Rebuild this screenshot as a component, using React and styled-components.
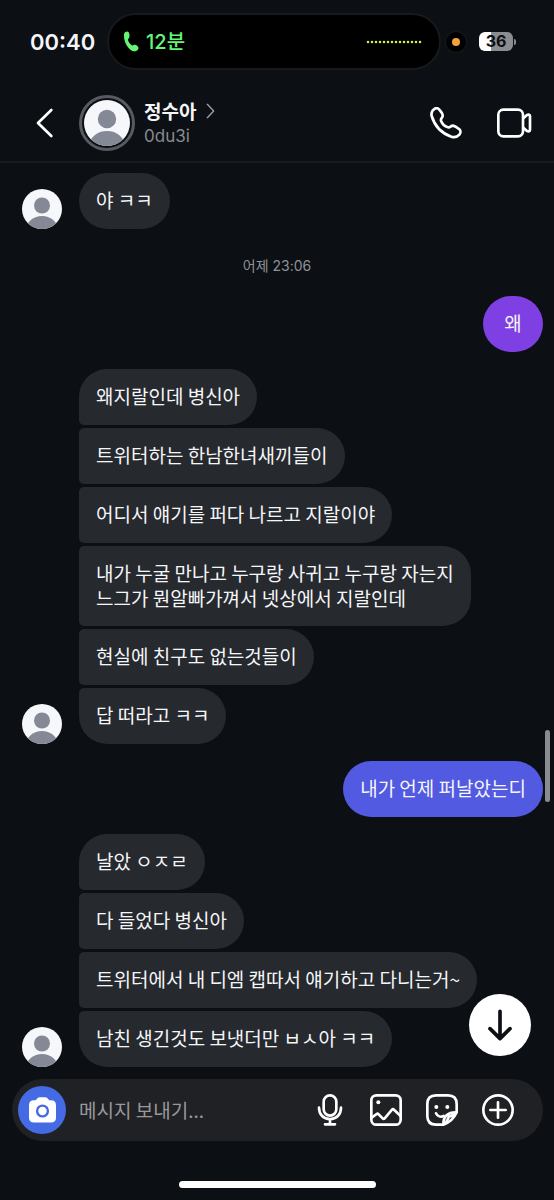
import styled, { createGlobalStyle } from 'styled-components';

const GlobalStyle = createGlobalStyle`
* {
  box-sizing: border-box;
}
body {
  margin: 0;
  background-color: #0c0f14;
  color: #f5f6f8;
  font-family: "Noto Sans CJK KR", sans-serif;
}
button, input {
  font: inherit;
  color: inherit;
  border: none;
  padding: 0;
  background: none;
}
button {
  cursor: pointer;
}
svg {
  display: block;
}
`

const Page = styled.div`
min-height: 100vh;
display: flex;
flex-direction: column;
position: relative;
`

const StatusBar = styled.div`
display: flex;
align-items: center;
padding: 13px 38px 0 30px;
`

const Clock = styled.time`
width: 77px;
font-family: Inter, sans-serif;
font-size: 22px;
font-weight: 600;
line-height: 24px;
`

const Island = styled.div`
flex: 1;
height: 57px;
display: flex;
align-items: center;
gap: 7px;
padding: 0 17px 0 14px;
border: 2px solid #17191d;
border-radius: 29px;
background-color: #000;
color: #66f476;
font-size: 20px;
font-weight: 500;
`

const CallTime = styled.span`
flex: 1;
line-height: 24px;
font-family: Inter, "Noto Sans CJK KR", sans-serif;
`

const MicDot = styled.span`
width: 20px;
height: 20px;
margin: 0 13px 0 5px;
border: 6px solid #000;
border-radius: 50%;
background-color: #f7a13c;
box-shadow: 0 0 0 1px #17191d;
`

const Battery = styled.div`
display: flex;
align-items: center;
gap: 1px;

&::after {
  content: "";
  width: 2px;
  height: 6px;
  border-radius: 0 2px 2px 0;
  background-color: #8b8c8f;
}
`

const BatteryLevel = styled.span`
width: 34px;
height: 19px;
border-radius: 6px;
background: linear-gradient(to right, #fff ${props => props.$level}%, #8b8c8f ${props => props.$level}%);
color: #0c0f14;
font-family: Inter, sans-serif;
font-size: 16px;
font-weight: 700;
line-height: 19px;
text-align: center;
`

const Header = styled.header`
height: 93px;
display: flex;
align-items: center;
padding: 14px 22px 0 36px;
border-bottom: 2px solid #171b20;
`

const BackButton = styled.button`
width: 43px;
`

const Ring = styled.span`
padding: 2px;
border: 3px solid #585a61;
border-radius: 50%;
`

const Profile = styled.a`
flex: 1;
display: flex;
align-items: center;
gap: 9px;
color: inherit;
text-decoration: none;
`

const Name = styled.strong`
display: flex;
align-items: center;
gap: 10px;
font-size: 19px;
font-weight: 700;
line-height: 26px;
`

const Handle = styled.span`
display: block;
color: #888b91;
font-family: Inter, sans-serif;
font-size: 17px;
line-height: 24px;
`

const HeaderActions = styled.div`
display: flex;
align-items: center;
gap: 34px;
`

const Chat = styled.main`
flex: 1;
display: flex;
flex-direction: column;
gap: 17px;
padding: 10px 11px 12px 22px;
`

const DateLine = styled.time`
margin: 10px 0 3px;
padding-right: 11px;
color: #8f9298;
font-family: Inter, "Noto Sans CJK KR", sans-serif;
font-size: 14px;
line-height: 20px;
text-align: center;
`

const Group = styled.section`
display: flex;
align-items: flex-end;
gap: 17px;
`

const Stack = styled.div`
flex: 1;
display: flex;
flex-direction: column;
align-items: flex-start;
gap: 3px;
`

const Bubble = styled.p`
margin: 0;
min-height: 56px;
min-width: 60px;
max-width: 90%;
padding: 14px 17px 16px;
border-radius: 28px;
background-color: #26292e;
font-size: 19px;
line-height: 25px;
white-space: pre-line;

${Stack} > &:not(:first-child) {
  border-top-left-radius: 5px;
}
${Stack} > &:not(:last-child) {
  border-bottom-left-radius: 5px;
}
`

const SentBubble = styled(Bubble)`
align-self: flex-end;
background-color: ${props => props.$color};
text-align: center;
`

const ScrollThumb = styled.div`
position: absolute;
top: 730px;
right: 4px;
width: 5px;
height: 72px;
border-radius: 3px;
background-color: #8a8c8f;
`

const Footer = styled.footer`
position: relative;
padding: 0 11px 12px 12px;
`

const JumpButton = styled.button`
position: absolute;
right: 23px;
bottom: 144px;
width: 62px;
height: 62px;
display: flex;
align-items: center;
justify-content: center;
border-radius: 50%;
background-color: #fff;
`

const Composer = styled.form`
height: 62px;
display: flex;
align-items: center;
padding: 0 29px 0 6px;
border-radius: 31px;
background-color: #202124;
`

const CameraButton = styled.button`
width: 48px;
height: 48px;
flex: none;
display: flex;
align-items: center;
justify-content: center;
border-radius: 50%;
background-color: #446be3;
`

const MessageInput = styled.input`
flex: 1;
min-width: 0;
margin-left: 13px;
font-size: 19px;
line-height: 28px;
outline: none;

&::placeholder {
  color: #97999d;
  opacity: 1;
}
`

const Tools = styled.div`
display: flex;
gap: 24px;
`

const HomeBar = styled.div`
width: 37%;
height: 7px;
margin: 40px auto 0;
border-radius: 4px;
background-color: #fff;
`

const Line = styled.svg`
fill: none;
stroke: #fff;
stroke-width: 8;
stroke-linecap: round;
stroke-linejoin: round;
`

const Avatar = ({ size }) => (
  <svg width={size} height={size} viewBox="0 0 40 40" aria-hidden="true">
    <clipPath id={`face${size}`}><circle cx="20" cy="20" r="20" /></clipPath>
    <g clipPath={`url(#face${size})`}>
      <rect width="40" height="40" fill="#f5f7fa" />
      <circle cx="20" cy="16.5" r="8" fill="#858895" />
      <ellipse cx="20" cy="40" rx="15.5" ry="13" fill="#858895" />
    </g>
  </svg>
)

const MicIcon = () => (
  <Line width="32" height="32" viewBox="0 0 96 96">
    <rect x="29" y="4" width="38" height="61" rx="19" />
    <path d="M15 41C15 62 29 75 48 75S81 62 81 41M48 75V90M33 91H63" />
  </Line>
)

const GalleryIcon = () => (
  <Line width="32" height="32" viewBox="0 0 96 96">
    <rect x="4" y="4" width="88" height="88" rx="15" />
    <circle cx="25" cy="25" r="6" fill="#fff" stroke="none" />
    <path d="M5 71L20 60Q23 58 26 61L38 73Q41 76 44 73L66 47Q69 44 72 47L91 65" />
  </Line>
)

const StickerIcon = () => (
  <Line width="32" height="32" viewBox="0 0 96 96">
    <path d="M52 92H30C12 92 4 84 4 66V30C4 12 12 4 30 4H66C84 4 92 12 92 30V55C85 71 70 86 52 92Z" />
    <path d="M52 91C52 68 65 54 91 55M55 89C67 82 66 70 69 68C78 66 85 65 90 57" />
    <path d="M30 58C34 67 44 70 53 66" />
    <circle cx="31" cy="39" r="6" fill="#fff" stroke="none" />
    <circle cx="64" cy="39" r="6" fill="#fff" stroke="none" />
  </Line>
)

const PlusIcon = () => (
  <Line width="32" height="32" viewBox="0 0 96 96">
    <circle cx="48" cy="48" r="44" />
    <path d="M48 25V71M25 48H71" />
  </Line>
)

const tools = [
  { label: '음성 메시지', Icon: MicIcon },
  { label: '사진', Icon: GalleryIcon },
  { label: '스티커', Icon: StickerIcon },
  { label: '더 보기', Icon: PlusIcon },
]

const thread = [
  { messages: ['야 ㅋㅋ'] },
  { date: '어제 23:06' },
  { sent: '왜', color: '#7e40e2' },
  {
    messages: [
      '왜지랄인데 병신아',
      '트위터하는 한남한녀새끼들이',
      '어디서 얘기를 퍼다 나르고 지랄이야',
      '내가 누굴 만나고 누구랑 사귀고 누구랑 자는지\n느그가 뭔알빠가껴서 넷상에서 지랄인데',
      '현실에 친구도 없는것들이',
      '답 떠라고 ㅋㅋ',
    ],
  },
  { sent: '내가 언제 퍼날았는디', color: '#525ae2' },
  {
    messages: [
      '날았 ㅇㅈㄹ',
      '다 들었다 병신아',
      '트위터에서 내 디엠 캡따서 얘기하고 다니는거~',
      '남친 생긴것도 보냇더만 ㅂㅅ아 ㅋㅋ',
    ],
  },
]

const Entry = ({ item }) => {
  if (item.date) return <DateLine>{item.date}</DateLine>
  if (item.sent) return <SentBubble $color={item.color}>{item.sent}</SentBubble>
  return (
    <Group>
      <Avatar size={40} />
      <Stack>
        {item.messages.map(text => <Bubble key={text}>{text}</Bubble>)}
      </Stack>
    </Group>
  )
}

const App = () => {
  return (
    <Page>
      <GlobalStyle />
      <StatusBar>
        <Clock>00:40</Clock>
        <Island>
          <svg width="16" height="21" viewBox="0 0 48 64" fill="currentColor">
            <path d="M3 8C5 2 14-1 17 4C20 9 20 16 18 21C16 24 14 24 15 28C18 37 23 41 28 44C31 45 32 42 36 42C41 42 47 48 47 52C47 58 40 63 33 62C15 58 0 32 3 8Z" />
          </svg>
          <CallTime>12분</CallTime>
          <svg width="56" height="4" viewBox="0 0 56 4">
            <path d="M2 2H55" stroke="#cdf25a" strokeWidth="2.6" strokeLinecap="round" strokeDasharray="0 4" />
          </svg>
        </Island>
        <MicDot />
        <Battery><BatteryLevel $level={36}>36</BatteryLevel></Battery>
      </StatusBar>

      <Header>
        <BackButton aria-label="뒤로">
          <Line width="18" height="30" viewBox="0 0 54 90">
            <path d="M46 6L6 45L46 84" />
          </Line>
        </BackButton>
        <Profile href="#profile">
          <Ring><Avatar size={46} /></Ring>
          <div>
            <Name>
              정수아
              <svg width="9" height="16" viewBox="0 0 27 48" fill="none" stroke="#a0a2a7" strokeWidth="4" strokeLinecap="round" strokeLinejoin="round">
                <path d="M4 4L23 24L4 44" />
              </svg>
            </Name>
            <Handle>0du3i</Handle>
          </div>
        </Profile>
        <HeaderActions>
          <button aria-label="음성 통화">
            <Line width="32" height="32" viewBox="0 0 96 96">
              <path d="M13 6C18 3 24 3 28 8C34 15 39 21 38 27C37 33 31 35 33 41C36 49 44 58 54 61C60 63 62 56 69 56C75 57 82 62 88 67C93 71 92 78 88 83C81 91 73 92 64 89C35 79 14 57 5 27C3 18 6 11 13 6Z" />
            </Line>
          </button>
          <button aria-label="영상 통화">
            <Line width="36" height="34" viewBox="0 0 108 102">
              <rect x="7" y="11" width="74" height="80" rx="15" />
              <path d="M82 37L93 27C98 25 102 26 102 31V71C102 76 98 77 93 75L82 65" />
            </Line>
          </button>
        </HeaderActions>
      </Header>

      <Chat>
        {thread.map((item, i) => <Entry key={i} item={item} />)}
      </Chat>
      <ScrollThumb />

      <Footer>
        <JumpButton aria-label="맨 아래로">
          <svg width="24" height="32" viewBox="0 0 72 96" fill="none" stroke="#0c0f14" strokeWidth="11" strokeLinecap="round" strokeLinejoin="round">
            <path d="M36 7V88M6 59L36 89L66 59" />
          </svg>
        </JumpButton>
        <Composer>
          <CameraButton type="button" aria-label="카메라">
            <svg width="27" height="26" viewBox="0 0 80 76">
              <path d="M15 9H18C23 9 24 0 31 0H49C56 0 57 9 62 9H65Q80 9 80 24V61Q80 75 65 75H15Q0 75 0 61V24Q0 9 15 9Z" fill="#fff" />
              <circle cx="40" cy="41" r="16" fill="none" stroke="#446be3" strokeWidth="7" />
            </svg>
          </CameraButton>
          <MessageInput aria-label="메시지" placeholder="메시지 보내기..." />
          <Tools>
            {tools.map(({ label, Icon }) => (
              <button key={label} type="button" aria-label={label}><Icon /></button>
            ))}
          </Tools>
        </Composer>
        <HomeBar />
      </Footer>
    </Page>
  )
}

export default App
